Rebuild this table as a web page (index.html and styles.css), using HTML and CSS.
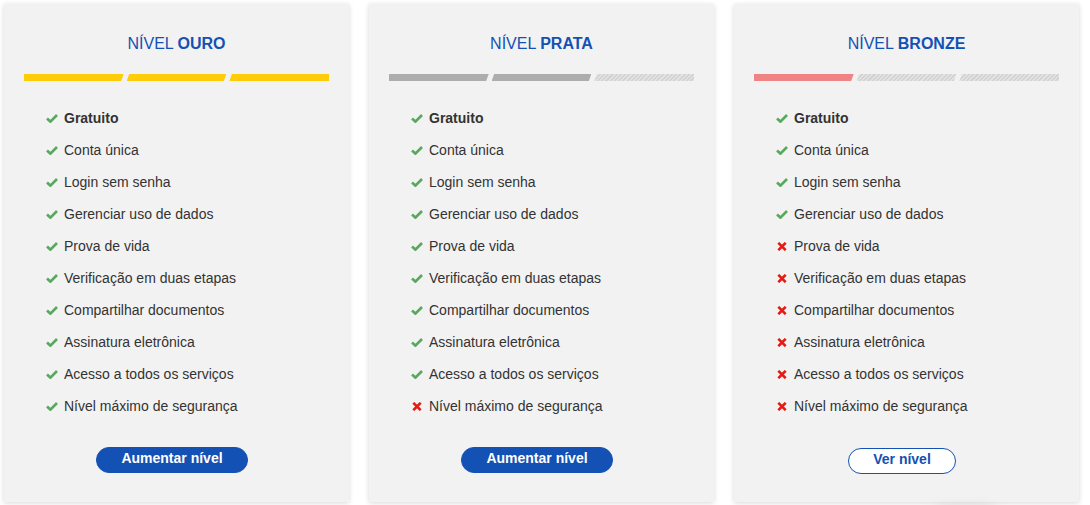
FILE: index.html
```html
<!DOCTYPE html>
<html lang="pt-BR">
<head>
<meta charset="utf-8">
<title>Níveis</title>
<link rel="stylesheet" href="styles.css">
</head>
<body>
<div class="cards">
  <section class="card">
    <h2 class="title">NÍVEL <strong>OURO</strong></h2>
    <div class="bars">
      <span class="bar first gold"></span><span class="bar mid gold"></span><span class="bar last gold"></span>
    </div>
    <ul class="list">
      <li class="ok bold"><svg class="ico" viewBox="0 0 12 9"><path d="M1 4.6 L4.4 7.6 L11 1"/></svg>Gratuito</li>
      <li class="ok"><svg class="ico" viewBox="0 0 12 9"><path d="M1 4.6 L4.4 7.6 L11 1"/></svg>Conta única</li>
      <li class="ok"><svg class="ico" viewBox="0 0 12 9"><path d="M1 4.6 L4.4 7.6 L11 1"/></svg>Login sem senha</li>
      <li class="ok"><svg class="ico" viewBox="0 0 12 9"><path d="M1 4.6 L4.4 7.6 L11 1"/></svg>Gerenciar uso de dados</li>
      <li class="ok"><svg class="ico" viewBox="0 0 12 9"><path d="M1 4.6 L4.4 7.6 L11 1"/></svg>Prova de vida</li>
      <li class="ok"><svg class="ico" viewBox="0 0 12 9"><path d="M1 4.6 L4.4 7.6 L11 1"/></svg>Verificação em duas etapas</li>
      <li class="ok"><svg class="ico" viewBox="0 0 12 9"><path d="M1 4.6 L4.4 7.6 L11 1"/></svg>Compartilhar documentos</li>
      <li class="ok"><svg class="ico" viewBox="0 0 12 9"><path d="M1 4.6 L4.4 7.6 L11 1"/></svg>Assinatura eletrônica</li>
      <li class="ok"><svg class="ico" viewBox="0 0 12 9"><path d="M1 4.6 L4.4 7.6 L11 1"/></svg>Acesso a todos os serviços</li>
      <li class="ok"><svg class="ico" viewBox="0 0 12 9"><path d="M1 4.6 L4.4 7.6 L11 1"/></svg>Nível máximo de segurança</li>
    </ul>
    <div class="actions"><button class="btn primary">Aumentar nível</button></div>
  </section>

  <section class="card">
    <h2 class="title">NÍVEL <strong>PRATA</strong></h2>
    <div class="bars">
      <span class="bar first silver"></span><span class="bar mid silver"></span><span class="bar last empty"></span>
    </div>
    <ul class="list">
      <li class="ok bold"><svg class="ico" viewBox="0 0 12 9"><path d="M1 4.6 L4.4 7.6 L11 1"/></svg>Gratuito</li>
      <li class="ok"><svg class="ico" viewBox="0 0 12 9"><path d="M1 4.6 L4.4 7.6 L11 1"/></svg>Conta única</li>
      <li class="ok"><svg class="ico" viewBox="0 0 12 9"><path d="M1 4.6 L4.4 7.6 L11 1"/></svg>Login sem senha</li>
      <li class="ok"><svg class="ico" viewBox="0 0 12 9"><path d="M1 4.6 L4.4 7.6 L11 1"/></svg>Gerenciar uso de dados</li>
      <li class="ok"><svg class="ico" viewBox="0 0 12 9"><path d="M1 4.6 L4.4 7.6 L11 1"/></svg>Prova de vida</li>
      <li class="ok"><svg class="ico" viewBox="0 0 12 9"><path d="M1 4.6 L4.4 7.6 L11 1"/></svg>Verificação em duas etapas</li>
      <li class="ok"><svg class="ico" viewBox="0 0 12 9"><path d="M1 4.6 L4.4 7.6 L11 1"/></svg>Compartilhar documentos</li>
      <li class="ok"><svg class="ico" viewBox="0 0 12 9"><path d="M1 4.6 L4.4 7.6 L11 1"/></svg>Assinatura eletrônica</li>
      <li class="ok"><svg class="ico" viewBox="0 0 12 9"><path d="M1 4.6 L4.4 7.6 L11 1"/></svg>Acesso a todos os serviços</li>
      <li class="no"><svg class="ico" viewBox="0 0 12 9"><path d="M2.3 0.8 L9.7 8.2 M9.7 0.8 L2.3 8.2"/></svg>Nível máximo de segurança</li>
    </ul>
    <div class="actions"><button class="btn primary">Aumentar nível</button></div>
  </section>

  <section class="card">
    <h2 class="title">NÍVEL <strong>BRONZE</strong></h2>
    <div class="bars">
      <span class="bar first bronze"></span><span class="bar mid empty"></span><span class="bar last empty"></span>
    </div>
    <ul class="list">
      <li class="ok bold"><svg class="ico" viewBox="0 0 12 9"><path d="M1 4.6 L4.4 7.6 L11 1"/></svg>Gratuito</li>
      <li class="ok"><svg class="ico" viewBox="0 0 12 9"><path d="M1 4.6 L4.4 7.6 L11 1"/></svg>Conta única</li>
      <li class="ok"><svg class="ico" viewBox="0 0 12 9"><path d="M1 4.6 L4.4 7.6 L11 1"/></svg>Login sem senha</li>
      <li class="ok"><svg class="ico" viewBox="0 0 12 9"><path d="M1 4.6 L4.4 7.6 L11 1"/></svg>Gerenciar uso de dados</li>
      <li class="no"><svg class="ico" viewBox="0 0 12 9"><path d="M2.3 0.8 L9.7 8.2 M9.7 0.8 L2.3 8.2"/></svg>Prova de vida</li>
      <li class="no"><svg class="ico" viewBox="0 0 12 9"><path d="M2.3 0.8 L9.7 8.2 M9.7 0.8 L2.3 8.2"/></svg>Verificação em duas etapas</li>
      <li class="no"><svg class="ico" viewBox="0 0 12 9"><path d="M2.3 0.8 L9.7 8.2 M9.7 0.8 L2.3 8.2"/></svg>Compartilhar documentos</li>
      <li class="no"><svg class="ico" viewBox="0 0 12 9"><path d="M2.3 0.8 L9.7 8.2 M9.7 0.8 L2.3 8.2"/></svg>Assinatura eletrônica</li>
      <li class="no"><svg class="ico" viewBox="0 0 12 9"><path d="M2.3 0.8 L9.7 8.2 M9.7 0.8 L2.3 8.2"/></svg>Acesso a todos os serviços</li>
      <li class="no"><svg class="ico" viewBox="0 0 12 9"><path d="M2.3 0.8 L9.7 8.2 M9.7 0.8 L2.3 8.2"/></svg>Nível máximo de segurança</li>
    </ul>
    <div class="actions"><button class="btn secondary">Ver nível</button></div>
  </section>
</div>
<div class="floating-clip"><div class="floating"></div></div>
</body>
</html>
```

FILE: styles.css
```css
html, body {
  margin: 0;
  background: #ffffff;
  overflow: hidden;
}

body {
  font-family: "Liberation Sans", Arial, sans-serif;
  color: #333333;
  height: 505px;
  position: relative;
}

.cards {
  display: flex;
  gap: 20px;
  padding: 4px 0 0 4px;
}

.card {
  width: 345px;
  height: 498px;
  box-sizing: border-box;
  background: #f2f2f2;
  box-shadow: 0 1px 5px rgba(0, 0, 0, 0.16);
  padding: 30px 20px 0;
}

.title {
  margin: 0;
  font-size: 16px;
  line-height: 20px;
  font-weight: normal;
  text-align: center;
  color: #1351b4;
}

.title strong {
  font-weight: bold;
}

.bars {
  display: flex;
  gap: 3px;
  margin-top: 20px;
  height: 7px;
}

.bar {
  flex: 1;
  height: 7px;
}

.bar.first {
  clip-path: polygon(0 0, 100% 0, calc(100% - 2.5px) 100%, 0 100%);
}

.bar.mid {
  clip-path: polygon(2.5px 0, 100% 0, calc(100% - 2.5px) 100%, 0 100%);
}

.bar.last {
  clip-path: polygon(2.5px 0, 100% 0, 100% 100%, 0 100%);
}

.gold { background: #ffcd07; }
.silver { background: #adadad; }
.bronze { background: #f08383; }

.empty {
  background: repeating-linear-gradient(-45deg, #e2e2e2 0, #e2e2e2 1.5px, #d2d2d2 1.5px, #d2d2d2 3px);
}

.list {
  list-style: none;
  margin: 21px 0 0;
  padding: 0 0 0 22px;
}

.list li {
  display: flex;
  align-items: center;
  height: 32px;
  font-size: 14px;
  color: #333333;
}

.list li.bold {
  font-weight: bold;
}

.ico {
  width: 12px;
  height: 9px;
  margin-right: 6px;
  flex: none;
  fill: none;
  stroke-width: 2.7;
  stroke-linecap: butt;
}

.ok .ico { stroke: #5aa85e; }
.no .ico { stroke: #e41c12; stroke-width: 2.6; }

.actions {
  display: flex;
  justify-content: center;
  padding-right: 9px;
  margin-top: 25px;
}

.btn {
  font-family: "Liberation Sans", Arial, sans-serif;
  font-size: 14px;
  font-weight: bold;
  line-height: 20px;
  height: 26px;
  box-sizing: border-box;
  padding: 0 24px 4px;
  border-radius: 13px;
  border: 1px solid #1351b4;
  cursor: pointer;
}

.btn.primary {
  background: #1351b4;
  color: #ffffff;
}

.btn.secondary {
  background: #ffffff;
  color: #1351b4;
  margin-top: 1px;
}

.floating-clip {
  position: absolute;
  left: 895px;
  top: 475px;
  width: 140px;
  height: 30px;
  overflow: hidden;
}

.floating {
  position: absolute;
  left: 30px;
  top: 37px;
  width: 80px;
  height: 40px;
  border-radius: 20px;
  background: #ffffff;
  box-shadow: 0 0 14px rgba(0, 0, 0, 0.35);
}
```
